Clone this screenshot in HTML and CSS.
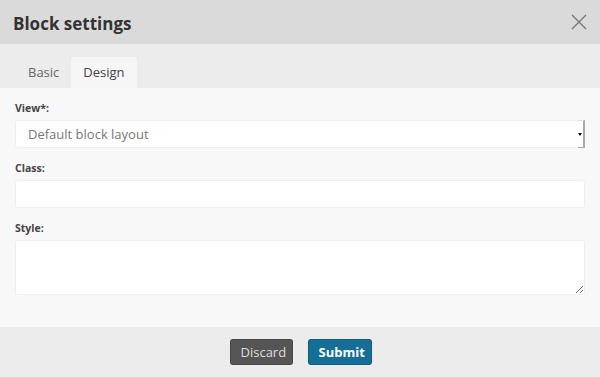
FILE: index.html
```html
<!DOCTYPE html>
<html lang="en">
<head>
    <meta charset="UTF-8">
    <title>Block settings</title>
    <link rel="stylesheet" href="styles.css">
</head>
<body>

    <div class="modal">
        <div class="modal-header">
            <h2>Block settings</h2>
            <button class="close-btn" type="button" aria-label="Close">
                <svg width="16" height="16" viewBox="0 0 16 16">
                    <path d="M1 1 L15 15 M15 1 L1 15" stroke="#777" stroke-width="1.4" fill="none"/>
                </svg>
            </button>
        </div>

        <div class="tabs">
            <a class="tab">Basic</a>
            <a class="tab active">Design</a>
        </div>

        <form class="modal-body">
            <label class="field-label">View*:</label>
            <div class="select-box">
                <span>Default block layout</span>
                <span class="select-arrow"></span>
            </div>

            <label class="field-label">Class:</label>
            <input type="text" class="text-input">

            <label class="field-label">Style:</label>
            <textarea class="text-area"></textarea>
        </form>

        <div class="modal-footer">
            <button type="button" class="btn btn-discard">Discard</button>
            <button type="button" class="btn btn-submit">Submit</button>
        </div>
    </div>

</body>
</html>
```

FILE: styles.css
```css
* {
    margin: 0;
    padding: 0;
    box-sizing: border-box;
}

body {
    font-family: 'Open Sans', sans-serif;
    background: #f8f8f8;
    width: 600px;
    height: 377px;
    overflow: hidden;
}

.modal {
    display: flex;
    flex-direction: column;
    height: 377px;
}

.modal-header {
    height: 44px;
    background: #dadada;
    display: flex;
    align-items: center;
    justify-content: space-between;
    padding: 0 13px 0 13px;
}

.modal-header h2 {
    font-size: 17px;
    font-weight: 700;
    color: #333;
    margin-top: 3px;
}

.close-btn {
    border: none;
    background: none;
    width: 16px;
    height: 16px;
    cursor: pointer;
}

.tabs {
    height: 44px;
    background: #ececec;
    display: flex;
    align-items: flex-end;
    padding-left: 16px;
}

.tab {
    font-size: 13px;
    color: #666;
    height: 31px;
    line-height: 31px;
    padding: 0 12px;
    border-radius: 3px 3px 0 0;
}

.tab.active {
    background: #f6f6f6;
    color: #444;
}

.modal-body {
    flex: 1;
    background: #f8f8f8;
    padding: 13px 15px 0 15px;
    display: flex;
    flex-direction: column;
}

.field-label {
    font-size: 10.5px;
    font-weight: 700;
    color: #444;
    height: 19px;
    line-height: 14px;
}

.select-box {
    height: 28px;
    background: #fff;
    border: 1px solid #eee;
    border-radius: 3px;
    display: flex;
    align-items: center;
    justify-content: space-between;
    padding-left: 12px;
    font-size: 13px;
    color: #777;
    margin-bottom: 13px;
}

.select-arrow {
    width: 7px;
    height: 28px;
    margin-right: -1px;
    border-right: 2px solid #aaa;
    border-top: 1px solid #ddd;
    border-bottom: 1px solid #aaa;
    position: relative;
}

.select-arrow::after {
    content: "";
    position: absolute;
    right: 1px;
    top: 12px;
    border-left: 2px solid transparent;
    border-right: 2px solid transparent;
    border-top: 3px solid #111;
}

.text-input {
    height: 28px;
    background: #fff;
    border: 1px solid #eee;
    border-radius: 3px;
    margin-bottom: 13px;
    font-family: inherit;
}

.text-area {
    height: 55px;
    background: #fff;
    border: 1px solid #eee;
    border-radius: 3px;
    resize: vertical;
    font-family: inherit;
}

.modal-footer {
    height: 50px;
    background: #ececec;
    display: flex;
    justify-content: center;
    align-items: flex-start;
    gap: 15px;
    padding-top: 12px;
    padding-left: 1px;
}

.btn {
    height: 26px;
    padding: 0 10px;
    border: 1px solid rgba(0, 0, 0, 0.15);
    border-radius: 3px;
    font-family: inherit;
    font-size: 13px;
    color: #fff;
    cursor: pointer;
}

.btn-discard {
    background: #555;
    color: #ddd;
    width: 63px;
}

.btn-submit {
    background: #146e96;
    font-weight: 700;
    width: 64px;
}
```
